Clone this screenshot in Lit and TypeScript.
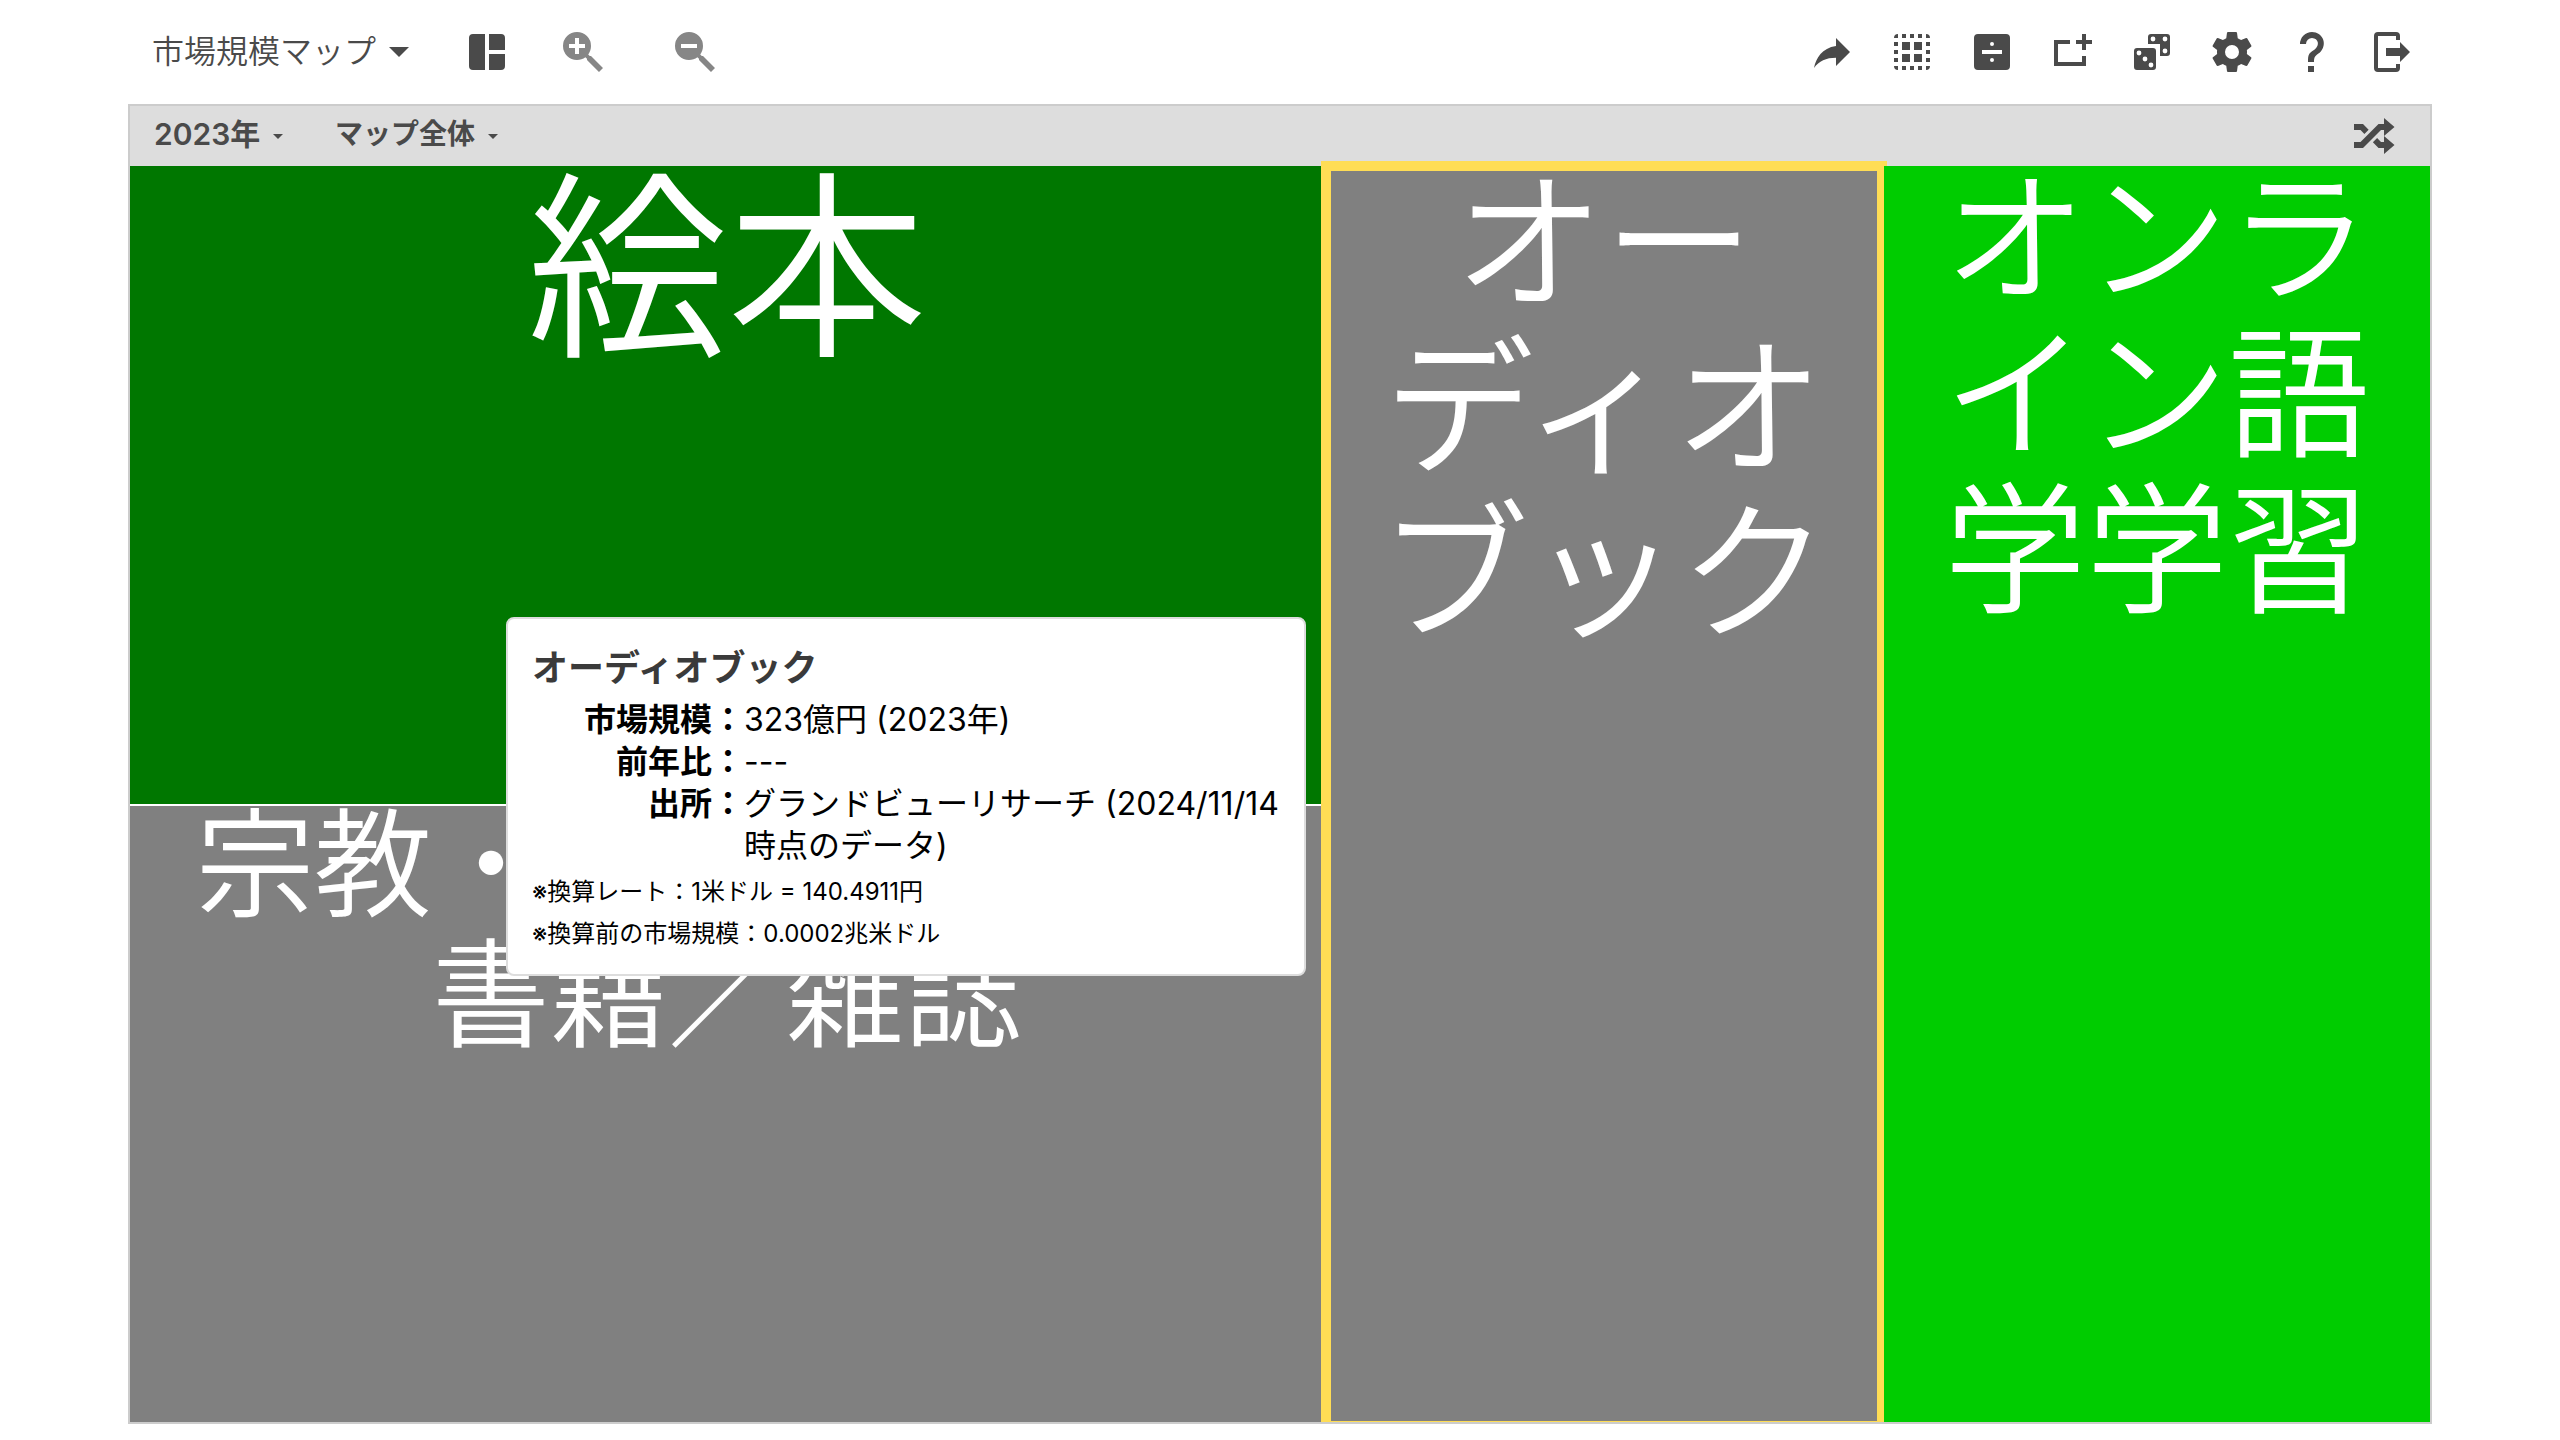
import { LitElement, html, css, svg } from "lit";
import { customElement } from "lit/decorators.js";

const ICONS: Record<string, string> = {
  layout:
    "M5 3H11V21H5A2 2 0 0 1 3 19V5A2 2 0 0 1 5 3ZM13 3H19A2 2 0 0 1 21 5V11H13ZM13 13H21V19A2 2 0 0 1 19 21H13Z",
  zoomIn:
    "M9,2A7,7 0 0,1 16,9C16,10.57 15.5,12 14.61,13.19L15.41,14H16L22,20L20,22L14,16V15.41L13.19,14.61C12,15.5 10.57,16 9,16A7,7 0 0,1 2,9A7,7 0 0,1 9,2M8,5V8H5V10H8V13H10V10H13V8H10V5H8Z",
  zoomOut:
    "M9,2A7,7 0 0,1 16,9C16,10.57 15.5,12 14.61,13.19L15.41,14H16L22,20L20,22L14,16V15.41L13.19,14.61C12,15.5 10.57,16 9,16A7,7 0 0,1 2,9A7,7 0 0,1 9,2M5,8V10H13V8H5Z",
  share: "M14 5L21 12L14 19V14.9C9 14.9 5.5 16.5 3 20C4 15 7 10 14 9Z",
  select:
    "M5 3V5H3A2 2 0 0 1 5 3ZM7 3H9V5H7ZM11 3H13V5H11ZM15 3H17V5H15ZM19 3A2 2 0 0 1 21 5H19ZM3 7H5V9H3ZM19 7H21V9H19ZM3 11H5V13H3ZM19 11H21V13H19ZM3 15H5V17H3ZM19 15H21V17H19ZM3 19H5V21A2 2 0 0 1 3 19ZM7 19H9V21H7ZM11 19H13V21H11ZM15 19H17V21H15ZM19 19H21A2 2 0 0 1 19 21ZM7 7H11V11H7ZM13 7H17V11H13ZM7 13H11V17H7ZM13 13H17V17H13Z",
  divide:
    "M5 3H19A2 2 0 0 1 21 5V19A2 2 0 0 1 19 21H5A2 2 0 0 1 3 19V5A2 2 0 0 1 5 3ZM7 11V13H17V11ZM12 7A1 1 0 1 0 12 9A1 1 0 1 0 12 7ZM12 15A1 1 0 1 0 12 17A1 1 0 1 0 12 15Z",
  addFrame: "M3 6H11V8H5V17H17V14H19V19H3ZM17 3H19V6H22V8H19V11H17V8H14V6H17Z",
  dice:
    "M4.5 10H12.5A1.5 1.5 0 0 1 14 11.5V19.5A1.5 1.5 0 0 1 12.5 21H4.5A1.5 1.5 0 0 1 3 19.5V11.5A1.5 1.5 0 0 1 4.5 10ZM5.5 11.3A1.2 1.2 0 1 0 5.5 13.7A1.2 1.2 0 1 0 5.5 11.3ZM8.5 14.3A1.2 1.2 0 1 0 8.5 16.7A1.2 1.2 0 1 0 8.5 14.3ZM11.5 17.3A1.2 1.2 0 1 0 11.5 19.7A1.2 1.2 0 1 0 11.5 17.3ZM11.5 3H19.5A1.5 1.5 0 0 1 21 4.5V12.5A1.5 1.5 0 0 1 19.5 14H16V8H10V4.5A1.5 1.5 0 0 1 11.5 3ZM12.5 4.3A1.2 1.2 0 1 0 12.5 6.7A1.2 1.2 0 1 0 12.5 4.3ZM18.5 4.3A1.2 1.2 0 1 0 18.5 6.7A1.2 1.2 0 1 0 18.5 4.3ZM18.5 10.3A1.2 1.2 0 1 0 18.5 12.7A1.2 1.2 0 1 0 18.5 10.3Z",
  settings:
    "M12,15.5A3.5,3.5 0 0,1 8.5,12A3.5,3.5 0 0,1 12,8.5A3.5,3.5 0 0,1 15.5,12A3.5,3.5 0 0,1 12,15.5M19.43,12.97C19.47,12.65 19.5,12.33 19.5,12C19.5,11.67 19.47,11.34 19.43,11L21.54,9.37C21.73,9.22 21.78,8.95 21.66,8.73L19.66,5.27C19.54,5.05 19.27,4.96 19.05,5.05L16.56,6.05C16.04,5.66 15.5,5.32 14.87,5.07L14.5,2.42C14.46,2.18 14.25,2 14,2H10C9.75,2 9.54,2.18 9.5,2.42L9.13,5.07C8.5,5.32 7.96,5.66 7.44,6.05L4.95,5.05C4.73,4.96 4.46,5.05 4.34,5.27L2.34,8.73C2.21,8.95 2.27,9.22 2.46,9.37L4.57,11C4.53,11.34 4.5,11.67 4.5,12C4.5,12.33 4.53,12.65 4.57,12.97L2.46,14.63C2.27,14.78 2.21,15.05 2.34,15.27L4.34,18.73C4.46,18.95 4.73,19.03 4.95,18.95L7.44,17.94C7.96,18.34 8.5,18.68 9.13,18.93L9.5,21.58C9.54,21.82 9.75,22 10,22H14C14.25,22 14.46,21.82 14.5,21.58L14.87,18.93C15.5,18.67 16.04,18.34 16.56,17.94L19.05,18.95C19.27,19.03 19.54,18.95 19.66,18.73L21.66,15.27C21.78,15.05 21.73,14.78 21.54,14.63L19.43,12.97Z",
  help:
    "M10,19H13V22H10V19M12,2C17.35,2.22 19.68,7.62 16.5,11.67C15.67,12.67 14.33,13.33 13.67,14.17C13,15 13,16 13,17H10C10,15.33 10,13.92 10.67,12.92C11.33,11.92 12.67,11.33 13.5,10.67C15.92,8.43 15.32,5.26 12,5A3,3 0 0,0 9,8H6A6,6 0 0,1 12,2Z",
  exit:
    "M5 2H14A2 2 0 0 1 16 4V6H14V4H5V20H14V18H16V20A2 2 0 0 1 14 22H5A2 2 0 0 1 3 20V4A2 2 0 0 1 5 2ZM9 10H16V7L21 12L16 17V14H9Z",
  shuffle:
    "M17,3L22.25,7.5L17,12L22.25,16.5L17,21V18H14.26L11.44,15.18L13.56,13.06L15.5,15H17V12L17,9H15.5L6.5,18H2V15H5.26L14.26,6H17V3M2,6H6.5L9.32,8.82L7.2,10.94L5.26,9H2V6Z",
};

const icon = (name: string) => svg`
  <svg class="icon" viewBox="0 0 24 24" aria-hidden="true">
    <path fill="currentColor" fill-rule="evenodd" d=${ICONS[name]}></path>
  </svg>`;

const TOOLS = [
  ["share", "共有"],
  ["select", "範囲選択"],
  ["divide", "分割"],
  ["addFrame", "枠を追加"],
  ["dice", "ランダム"],
  ["settings", "設定"],
  ["help", "ヘルプ"],
  ["exit", "終了"],
];

@customElement("app-root")
export class AppRoot extends LitElement {
  static styles = css`
    :host {
      display: flex;
      flex-direction: column;
      box-sizing: border-box;
      min-height: 100vh;
      padding: 0 5% 16px;
      background: #fff;
      color: #4a4a4a;
      font-family: Inter, "Noto Sans CJK JP", sans-serif;
      font-size: 32px;
    }
    .toolbar {
      display: flex;
      align-items: center;
      justify-content: space-between;
      height: 104px;
      padding: 0 16px 0 24px;
    }
    .group,
    .tools {
      display: flex;
      align-items: center;
    }
    .tools {
      gap: 32px;
    }
    .zooms {
      display: flex;
      gap: 64px;
      margin-left: 48px;
      color: #868686;
    }
    .views {
      margin-left: 54px;
    }
    button {
      display: block;
      padding: 0;
      border: 0;
      background: none;
      color: inherit;
      cursor: pointer;
    }
    .icon {
      display: block;
      width: 48px;
      height: 48px;
    }
    .picker {
      display: flex;
      align-items: center;
      gap: 12px;
    }
    .picker select {
      appearance: none;
      margin: 0;
      padding: 0;
      border: 0;
      background: none;
      color: inherit;
      font: inherit;
      line-height: 48px;
      cursor: pointer;
    }
    .title {
      font-weight: 350;
    }
    .caret {
      display: block;
      width: 20px;
      height: 10px;
    }
    .panel {
      flex: 1;
      display: flex;
      flex-direction: column;
      border: 2px solid #ccc;
    }
    .filters {
      display: flex;
      align-items: center;
      gap: 52px;
      height: 60px;
      padding: 0 32px 0 24px;
      background: #ddd;
      font-size: 28px;
      font-weight: 600;
    }
    .filters .year {
      font-size: 30px;
    }
    .filters select {
      padding-bottom: 4px;
    }
    .filters .caret {
      width: 10px;
      height: 5px;
    }
    .shuffle {
      margin-left: auto;
    }
    .map {
      position: relative;
      flex: 1;
      display: grid;
      grid-template-columns: 1194fr 556fr 546fr;
      grid-template-rows: 638fr 616fr;
      gap: 2px;
      clip-path: inset(-5px 0 0 0);
    }
    .tile {
      min-width: 0;
      min-height: 0;
      color: #fff;
      text-align: center;
      line-height: 1.1;
    }
    .label {
      margin: 0;
      margin-top: round(-0.04em, 1px);
      font-weight: 350;
      font-size: inherit;
    }
    .picture {
      background: #007700;
      font-size: 200px;
    }
    .religion {
      grid-column: 1;
      background: #808080;
      font-size: 118px;
    }
    .religion .first {
      display: block;
      width: 9em;
      margin: 0 auto;
      text-align: left;
    }
    .audio {
      position: relative;
      grid-column: 2;
      grid-row: 1 / 3;
      background: #808080;
      font-size: 150px;
    }
    .audio::after {
      content: "";
      position: absolute;
      inset: -5px -5px -9px;
      border: 10px solid #ffdd55;
    }
    .language {
      position: relative;
      grid-column: 3;
      grid-row: 1 / 3;
      background: #00cc00;
      font-size: 142px;
    }
    .tooltip {
      position: absolute;
      left: 376px;
      top: 451px;
      box-sizing: border-box;
      width: 800px;
      padding: 26px 24px 19px;
      border: 2px solid #ddd;
      border-radius: 8px;
      background: #fff;
      color: #000;
      line-height: 42px;
    }
    .tooltip h2 {
      margin: 0 0 8px;
      color: #3a3a3a;
      font-size: 36px;
      font-weight: 600;
      line-height: 46px;
    }
    .facts {
      display: grid;
      grid-template-columns: 212px 1fr;
      margin: 0 0 4px;
    }
    .facts dt {
      text-align: right;
      font-weight: 600;
    }
    .facts dd {
      margin: 0;
    }
    .note {
      margin: 0;
      font-size: 24px;
    }
  `;

  private caret() {
    return svg`<svg class="caret" viewBox="0 0 20 10" aria-hidden="true"><path fill="currentColor" d="M0 0H20L10 10Z"></path></svg>`;
  }

  private picker(kind: string, label: string, value: string) {
    return html`<label class="picker ${kind}">
      <select aria-label=${label}>
        <option>${value}</option>
      </select>
      ${this.caret()}
    </label>`;
  }

  render() {
    return html`
      <header class="toolbar">
        <div class="group">
          ${this.picker("title", "マップの種類", "市場規模マップ")}
          <button class="views" aria-label="レイアウト">${icon("layout")}</button>
          <div class="zooms">
            <button aria-label="拡大">${icon("zoomIn")}</button>
            <button aria-label="縮小">${icon("zoomOut")}</button>
          </div>
        </div>
        <nav class="tools">
          ${TOOLS.map(([name, label]) => html`<button aria-label=${label}>${icon(name)}</button>`)}
        </nav>
      </header>
      <main class="panel">
        <div class="filters">
          ${this.picker("year", "年", "2023年")}
          ${this.picker("scope", "範囲", "マップ全体")}
          <button class="shuffle" aria-label="シャッフル">${icon("shuffle")}</button>
        </div>
        <div class="map">
          <section class="tile picture"><h3 class="label">絵本</h3></section>
          <section class="tile religion">
            <h3 class="label"><span class="first">宗教・</span>書籍／雑誌</h3>
          </section>
          <section class="tile audio">
            <h3 class="label">オー<br />ディオ<br />ブック</h3>
          </section>
          <section class="tile language">
            <h3 class="label">オンラ<br />イン語<br />学学習</h3>
          </section>
          <aside class="tooltip">
            <h2>オーディオブック</h2>
            <dl class="facts">
              <dt>市場規模：</dt>
              <dd>323億円 (2023年)</dd>
              <dt>前年比：</dt>
              <dd>---</dd>
              <dt>出所：</dt>
              <dd>グランドビューリサーチ (2024/11/14<br />時点のデータ)</dd>
            </dl>
            <p class="note">※換算レート：1米ドル = 140.4911円</p>
            <p class="note">※換算前の市場規模：0.0002兆米ドル</p>
          </aside>
        </div>
      </main>
    `;
  }
}
